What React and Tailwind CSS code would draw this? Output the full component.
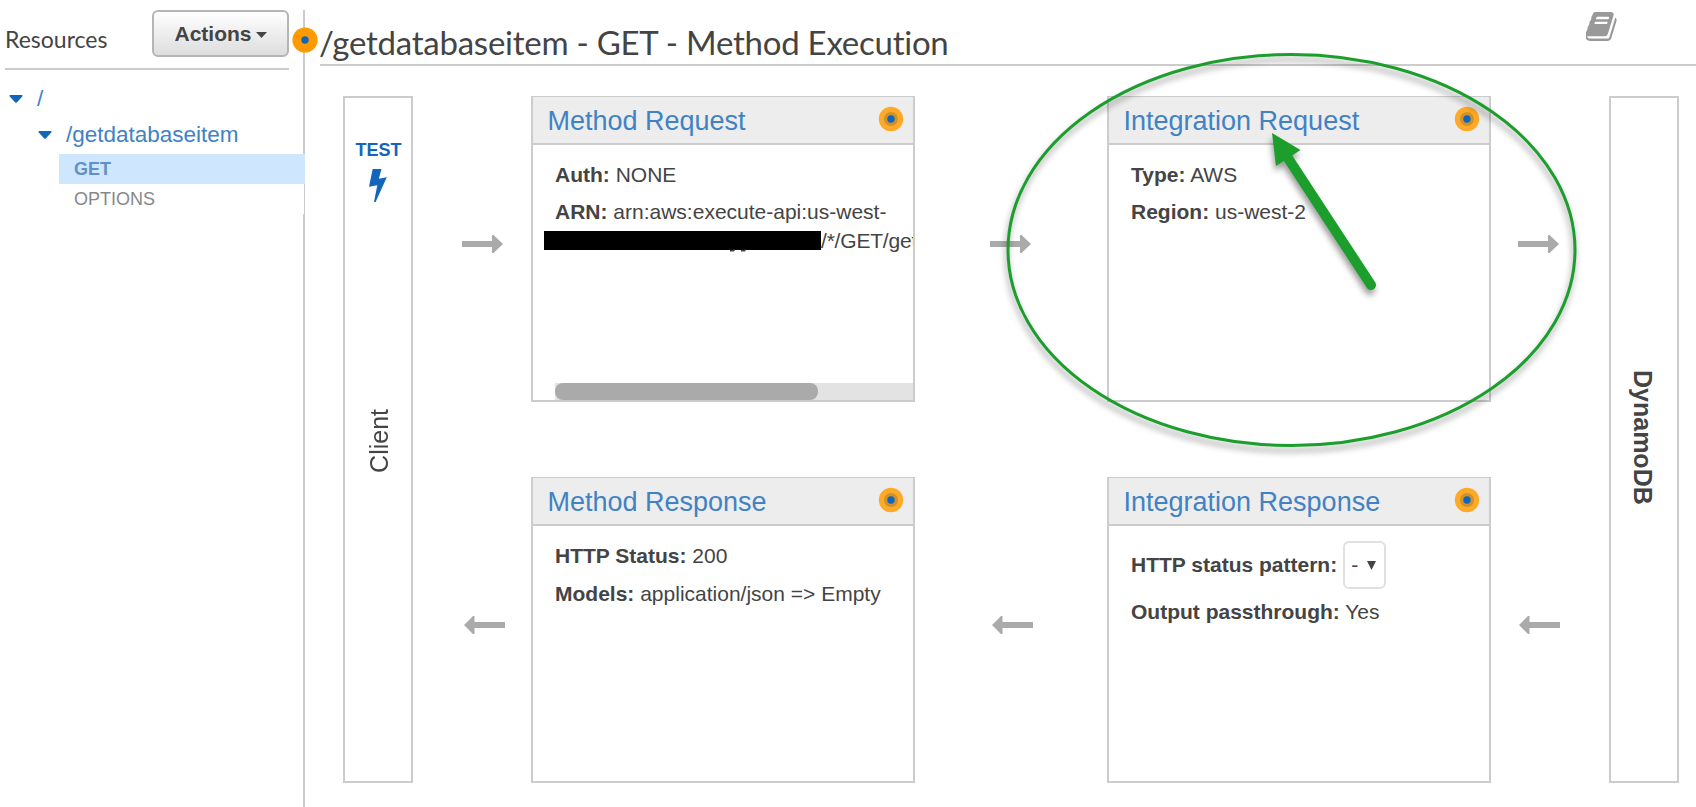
const BOOK =
  "M1639 478q40 57 18 129l-275 906q-19 64-76.500 107.500t-122.500 43.500h-923q-77 0-148.500-53.500t-99.500-131.500q-24-67-2-127 0-4 3-27t4-37q1-8-3-21.500t-3-19.500q2-11 8-21t16.500-23.500 16.500-23.500q23-38 45-91.500t30-91.500q3-10 .5-30t-.5-28q3-11 17-28t17-23q21-36 42-92t25-90q1-9-2.500-32t.5-28q4-13 22-30.500t22-22.500q19-26 42.500-84.500t27.500-96.500q1-8-3-25.500t-2-26.500q2-8 9-18t18-23 17-21q8-12 16.500-30.500t15-35 16-36 19.500-32 26.500-23.500 36-11.500 47.500 5.500l-1 3q38-9 51-9h761q74 0 114 56t18 130l-274 906q-36 119-71.500 153.500t-128.500 34.500h-869q-27 0-38 15-11 16-1 43 24 70 144 70h923q29 0 56-15.500t35-41.500l300-987q7-22 5-57 38 15 59 43zm-1064 2q-4 13 2 22.500t20 9.500h608q13 0 25.500-9.500t16.500-22.500l21-64q4-13-2-22.500t-20-9.500h-608q-13 0-25.500 9.500t-16.500 22.500zm-83 256q-4 13 2 22.500t20 9.500h608q13 0 25.500-9.500t16.500-22.500l21-64q4-13-2-22.500t-20-9.500h-608q-13 0-25.500 9.500t-16.500 22.500z";

function Caret({ className }) {
  return (
    <svg viewBox="0 0 14 8" className={"h-2 w-3.5 shrink-0 " + className} fill="#1166bb">
      <path d="M1 0h12q1 .6.300 1.600L8 7.200Q7 8.300 6 7.200L.7 1.600Q0 .6 1 0z" />
    </svg>
  );
}

function FlowArrow({ left, className }) {
  return (
    <svg viewBox="0 0 41 18" className={"h-[18px] w-[41px] shrink-0 " + className} fill="#aaaaaa">
      {left ? <path d="M0 9l9-9h1.500v6H41v6H10.500v6H9z" /> : <path d="M41 9l-9.500-9H30v6H0v6h30v6h1.500z" />}
    </svg>
  );
}

function Hint() {
  return (
    <svg viewBox="0 0 26 26" className="size-[26px] shrink-0">
      <circle cx="13" cy="13" r="12.200" fill="#ffa929" />
      <circle cx="13" cy="13" r="7" fill="#cf9128" />
      <circle cx="13" cy="13" r="3.700" fill="#1166bb" />
    </svg>
  );
}

function Card({ title, children }) {
  return (
    <section className="flex h-[306px] w-[384px] flex-col border-2 border-t border-[#cccccc] bg-white">
      <header className="flex h-12 shrink-0 items-center justify-between border-b-2 border-[#cccccc] bg-[#ededed] pr-[9.500px] pl-[14.500px]">
        <h2 className="pt-0.5 text-[27px] leading-[46px] text-[#4182c4]">{title}</h2>
        <div className="-mt-0.5">
          <Hint />
        </div>
      </header>
      <div className="flex grow flex-col overflow-hidden pl-[22px] text-[21px] whitespace-nowrap">{children}</div>
    </section>
  );
}

function Connector({ className, right, left }) {
  return (
    <div className={"flex shrink-0 flex-col " + className}>
      <FlowArrow className={"mt-[139px] " + right} />
      <FlowArrow left className={"mt-[363px] " + left} />
    </div>
  );
}

export default function App() {
  return (
    <div className="relative flex h-[807px] w-[1696px] overflow-hidden bg-white font-['Liberation_Sans',Arial,sans-serif] text-[#444444]">
      <aside className="flex w-[305px] shrink-0 flex-col">
        <div className="ml-[5px] flex h-[70px] w-[284px] items-start justify-between border-b-2 border-[#cccccc] pt-2.5">
          <h3 className="pt-[14px] font-[Lato,sans-serif] text-[23px] leading-[30px]">Resources</h3>
          <button className="flex h-[47px] w-[137px] items-center justify-center gap-[4px] rounded-md border-2 border-[#b5b5b5] bg-linear-to-b from-white to-[#dddddd] text-[21px] font-bold">
            Actions
            <svg viewBox="0 0 11 6" className="mt-0.5 h-1.5 w-[11px]" fill="#444444">
              <path d="M0 0h11L5.500 6z" />
            </svg>
          </button>
        </div>
        <div className="mt-3 flex h-[34px] items-center pl-[9px] text-[22.500px] text-[#4182c4]">
          <Caret className="mr-3.5" />/
        </div>
        <div className="flex h-[38px] items-center pl-[38px] text-[22.500px] text-[#4182c4]">
          <Caret className="mr-3.5" />
          /getdatabaseitem
        </div>
        <div className="ml-[59px] h-[30px] bg-[#cfe6ff] pl-[15px] text-[18px] leading-[30px] font-bold text-[#6191c4]">GET</div>
        <div className="ml-[59px] h-[30px] pl-[15px] text-[18px] leading-[30px] text-[#888888]">OPTIONS</div>
      </aside>
      <div className="absolute top-[10px] left-[303px] h-[144px] w-0.5 bg-[#cccccc]" />
      <div className="absolute top-[184px] left-[304px] h-[30px] w-px bg-[#cccccc]" />
      <div className="absolute top-[214px] left-[303px] h-[593px] w-0.5 bg-[#cccccc]" />
      <svg viewBox="0 0 26 26" className="absolute top-[26.500px] left-[291.500px] size-[26px]">
        <circle cx="13" cy="13" r="12.600" fill="#ff9900" />
        <circle cx="13" cy="13" r="3.700" fill="#1166bb" />
      </svg>

      <main className="flex grow flex-col">
        <div className="ml-[15px] flex h-[66px] items-start justify-between border-b-2 border-[#cccccc] pr-[79px]">
          <h1 className="-ml-px pt-[22px] font-[Lato,sans-serif] text-[33px] leading-[40px] tracking-[-0.250px] whitespace-nowrap [font-variant-ligatures:none]">
            /getdatabaseitem - GET - Method Execution
          </h1>
          <svg viewBox="63 128 1601 1536" className="mt-3 h-[29px] w-[31px]" fill="#999999">
            <path d={BOOK} />
          </svg>
        </div>

        <div className="mt-[30px] flex h-[687px] pl-[38px]">
          <div className="flex w-[70px] shrink-0 flex-col items-center border-2 border-[#cccccc]">
            <div className="mt-[42px] pl-px text-[18px] leading-5 font-bold text-[#1166bb]">TEST</div>
            <svg viewBox="0 0 18 33" className="mt-[9px] h-[33px] w-[18px]" fill="#1166bb">
              <path d="M3.700 0h8.800L9.800 9.700l8-1.400L6.600 33H5L8.300 16.300 0 17.700z" />
            </svg>
            <div className="mt-[207px] rotate-180 pr-0.5 text-[25px] leading-7 [writing-mode:vertical-rl]">Client</div>
          </div>
          <Connector className="w-[118px]" right="ml-[49px]" left="ml-[50.500px]" />
          <div className="flex shrink-0 flex-col gap-[75px]">
            <Card title="Method Request">
              <p className="mt-[15px] leading-[30px]">
                <b>Auth:</b> NONE
              </p>
              <p className="mt-[7px] leading-[30px]">
                <b>ARN:</b> arn:aws:execute-api:us-west-
              </p>
              <div className="-ml-[11px] flex items-start leading-[28px]">
                <span className="mt-1 h-[19px] w-[277px] shrink-0 bg-black">
                  <svg viewBox="0 0 277 21" className="h-[21px] w-[277px]" fill="none" stroke="#444444" strokeWidth="1.500">
                    <path d="M186 19.700h3.500l1-1.200M197 19.700h3.500l1-1.200" />
                  </svg>
                </span>
                <span className="tracking-[-0.200px]">/*/GET/getdatabaseitem</span>
              </div>
              <div className="mt-auto h-[17px] bg-[#e3e3e3]">
                <div className="h-full w-[263px] rounded-lg bg-[#aaaaaa]" />
              </div>
            </Card>
            <Card title="Method Response">
              <p className="mt-[15px] leading-[30px]">
                <b>HTTP Status:</b> 200
              </p>
              <p className="mt-2 leading-[30px]">
                <b>Models:</b> application/json =&gt; Empty
              </p>
            </Card>
          </div>
          <Connector className="w-[192px]" right="ml-[75px]" left="ml-[76.500px]" />
          <div className="flex shrink-0 flex-col gap-[75px]">
            <Card title="Integration Request">
              <p className="mt-[15px] leading-[30px]">
                <b>Type:</b> AWS
              </p>
              <p className="mt-[7px] leading-[30px]">
                <b>Region:</b> us-west-2
              </p>
            </Card>
            <Card title="Integration Response">
              <div className="mt-[15px] flex h-12 items-center">
                <b>HTTP status pattern:</b>
                <span className="ml-1.5 flex h-12 w-[43px] items-center justify-between rounded-md border-2 border-[#e0e0e0] pr-2 pl-1.5">
                  -
                  <svg viewBox="0 0 9 9" className="size-[9px]" fill="#444444">
                    <path d="M0 0h9L4.500 9z" />
                  </svg>
                </span>
              </div>
              <p className="mt-2 leading-[30px]">
                <b>Output passthrough:</b> Yes
              </p>
            </Card>
          </div>
          <Connector className="w-[118px]" right="ml-[27px]" left="ml-[28px]" />
          <div className="flex w-[70px] shrink-0 items-center justify-center border-2 border-[#cccccc]">
            <div className="-mt-[5px] pr-[3px] text-[25px] leading-7 font-bold [writing-mode:vertical-rl]">DynamoDB</div>
          </div>
        </div>
      </main>

      <svg
        viewBox="0 0 600 420"
        className="pointer-events-none absolute top-[40px] left-[990px] h-[420px] w-[600px] drop-shadow-[-1px_5px_3px_rgba(0,0,0,0.4)]"
      >
        <ellipse cx="301.500" cy="210" rx="283.500" ry="195.500" fill="none" stroke="#1c9e2c" strokeWidth="3" />
        <path d="M294 112L381 245" stroke="#1c9e2c" strokeWidth="10" strokeLinecap="round" />
        <path d="M282 93L310.500 110 286 126z" fill="#1c9e2c" />
      </svg>
    </div>
  );
}
